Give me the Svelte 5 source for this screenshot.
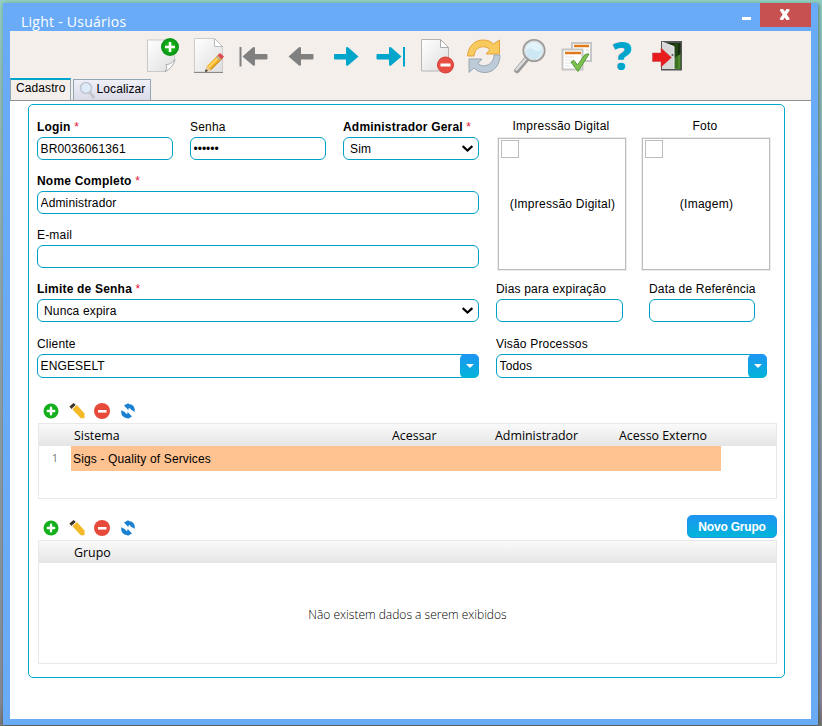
<script>
	let tab = 'cadastro';
	let login = 'BR0036061361';
	let senha = '123456';
	let adminGeral = 'Sim';
	let nome = 'Administrador';
	let email = '';
	let limite = 'Nunca expira';
	let dias = '';
	let dataRef = '';
	let cliente = 'ENGESELT';
	let visao = 'Todos';

	const sistemas = ['Sigs - Quality of Services'];
</script>

{#snippet gridTools()}
	<div class="grid-tools">
		<svg viewBox="0 0 16 16"
			><circle cx="8" cy="8" r="7.5" fill="#13b01c" /><path
				d="M8 4.8v6.4M4.8 8h6.4"
				stroke="#fff"
				stroke-width="2.4"
				stroke-linecap="round"
			/></svg
		>
		<svg viewBox="0 0 16 16"
			><path d="M3.3 6.2l4.6-4.2 7.6 8.5v4.700h-3.700z" fill="#f4b926" /><path
				d="M.4 3.6L4.6 0l2.200 2-4.200 3.900z"
				fill="#3d3427"
			/><path d="M2.800 6l4.600-4.200" stroke="#eee" stroke-width="1" /></svg
		>
		<svg viewBox="0 0 16 16"
			><circle cx="8" cy="8" r="8" fill="#e74a3b" /><path
				d="M4 8.300h8.500"
				stroke="#fff"
				stroke-width="2.600"
			/></svg
		>
		<svg viewBox="0 0 16 16"
			><g fill="#1b80d0"
				><path d="M4 2.500L8.500 0v1c4 0 7 3 6.200 7.800l-3.700-2C10.500 5.600 10 5.200 8.500 5.200v2z" /><path
					d="M12 13.500L7.500 16v-1c-4 0-7-3-6.200-7.800l3.700 2c.5 1.200 1 1.600 2.500 1.600v-2z"
				/></g
			></svg
		>
	</div>
{/snippet}

{#snippet chevron()}
	<svg class="chevron" viewBox="0 0 10 6"
		><path d="M.6.8L5 4.800 9.400.8" fill="none" stroke="#000" stroke-width="2" /></svg
	>
{/snippet}

<div class="desktop">
	<div class="window">
		<div class="titlebar">
			<span class="title">Light - Usuários</span>
			<button class="minimize" aria-label="Minimizar"><span></span></button>
			<button class="close" aria-label="Fechar">
				<svg viewBox="0 0 12 11"
					><path d="M2 0L9.500 11M9.500 0L2 11" stroke="#fff" stroke-width="3.400" /></svg
				>
			</button>
		</div>

		<div class="toolbar">
			<svg viewBox="0 0 36 36">
				<path
					d="M3.500 2h27v19c-1 5-5 10-9 12.500h-18z"
					fill="url(#paper)"
					stroke="#c9c9c9"
				/>
				<path d="M21 33.500c2-3 2-5 1-7 3 0 6-1 9-5-1 5-5 10-10 12z" fill="#fff" stroke="#aaa" />
				<circle cx="26" cy="9" r="9" fill="url(#green)" />
				<path d="M26 4v10M21 9h10" stroke="#fff" stroke-width="2.5" />
			</svg>
			<svg viewBox="0 0 36 36">
				<path d="M4.500.5h20l8 8V34h-28z" fill="url(#paper)" stroke="#ccc" />
				<path d="M4 34.500h29" stroke="#888" />
				<path d="M24.500.5v8h8z" fill="#fff" stroke="#bbb" />
				<path d="M15 34l2-6 12-12 4 4-12 12z" fill="#f5b32a" />
				<path d="M18.500 29.500L30.500 17.500" stroke="#ffe27a" stroke-width="1.300" />
				<path d="M20.500 32L32 20.500" stroke="#bf7c17" stroke-width="1" />
				<path d="M27.500 17.500l2.500-2.500 4 3.500-2.500 2.800z" fill="#d94b55" />
				<path d="M26.300 18.500l4.200 3.800" stroke="#aaa" stroke-width="1.500" />
				<path d="M15 34l2-6 4.200 4z" fill="#e9c99a" /><path d="M15 34l.8-3 2.200 2z" fill="#333" />
			</svg>
			<svg viewBox="0 0 36 36" fill="#808080">
				<path d="M3.500 9H5.500v19.500H3.500z" />
				<path d="M6.500 18.500L17 9.300q2-1 2 1V16h11.500q1 0 1 1v3.500q0 1-1 1H19v5q0 2-2 1z" />
			</svg>
			<svg viewBox="0 0 36 36" fill="#808080">
				<path d="M6.500 18.500L17 9.300q2-1 2 1V16h11.500q1 0 1 1v3.500q0 1-1 1H19v5q0 2-2 1z" />
			</svg>
			<svg viewBox="0 0 36 36" fill="#00a5cc">
				<path d="M30.500 18.500L20 9.300q-2-1-2 1V16H7q-1 0-1 1v3.500q0 1 1 1h11v5q0 2 2 1z" />
			</svg>
			<svg viewBox="0 0 36 36" fill="#00a5cc">
				<path d="M27.500 18.500L17 9.300q-2-1-2 1V16H3.500q-1 0-1 1v3.500q0 1 1 1H15v5q0 2 2 1z" />
				<path d="M29 9H31v19.500H29z" />
			</svg>
			<svg viewBox="0 0 36 36">
				<path d="M1.500 1.500h19l8 8V33h-27z" fill="url(#paper)" stroke="#b5b5b5" />
				<path d="M20.500 1.500v8h8z" fill="#fff" stroke="#aaa" />
				<circle cx="25.500" cy="27" r="8" fill="#e94c43" stroke="#d0413b" />
				<path d="M20.500 27h10" stroke="#fff" stroke-width="3" />
			</svg>
			<svg viewBox="0 0 36 36">
				<path
					d="M1.500 18C2 8 9 2 17 2c5 0 8 1.500 10.500 4L33.500 2v14H20l4-4.500C18 6 8.500 9 8 18z"
					fill="#f8c95c"
					stroke="#e3a440"
				/>
				<path
					d="M34 17C34 27 28 34.500 19 34.500c-5 0-8-1.500-11-4.500L3 34.500V21h13l-4 4.500C18 31 28 26 28 17z"
					fill="#bccbd7"
					stroke="#9aa8b3"
				/>
			</svg>
			<svg viewBox="0 0 36 36">
				<path d="M15 20.500L5 32.500" stroke="#999" stroke-width="5.500" stroke-linecap="round" />
				<path d="M14 20.500L4.500 31.500" stroke="#ddd" stroke-width="2.500" stroke-linecap="round" />
				<circle cx="22" cy="12.500" r="10.300" fill="#e3f3fb" stroke="#999" stroke-width="2.500" />
				<circle cx="22" cy="12.500" r="9.500" fill="none" stroke="#e5e5e5" stroke-width="1" />
				<path d="M14 13c2-3 5-3 8-1s5 1 8-1c0 12-15 14-16 2z" fill="#cde8f5" />
			</svg>
			<svg viewBox="0 0 36 36">
				<path d="M14 5h19v18H14z" fill="#fff" stroke="#c6c6c6" stroke-width="2" />
				<path d="M16 8h15" stroke="#e07a18" stroke-width="2.500" />
				<path d="M28 12h3M28 15h3" stroke="#ddd" />
				<path d="M4.500 11.500h20v20h-20z" fill="#fff" stroke="#c6c6c6" stroke-width="2" />
				<path d="M7 15h16" stroke="#e07a18" stroke-width="2.500" />
				<path d="M7 19h9M7 22h9M7 25h7M7 28h5" stroke="#e1e1e1" />
				<path
					d="M13 24l3-1.500 3.500 4.500L27 16.500l4-.5-11 17.500z"
					fill="#7fc252"
					stroke="#4d9a32"
					stroke-width="1"
				/>
			</svg>
			<svg viewBox="0 0 36 36"
				><text x="18" y="32" text-anchor="middle" class="help">?</text></svg
			>
			<svg viewBox="0 0 36 36">
				<path d="M11 3h21v29.500H11z" fill="#555" />
				<path d="M13 5h17.500v26H13z" fill="#18300f" />
				<path d="M24 20l6.500-4v15H24z" fill="#4f8a2f" />
				<path d="M24 6l4-1v25h-4z" fill="#2c5a1c" opacity=".5" />
				<path d="M12 4l12 4.500V31L12 31z" fill="#d8d8d8" />
				<path d="M12 4l12 4.500V31" fill="none" stroke="#f0f0f0" />
				<circle cx="22.500" cy="17" r="1" fill="#555" />
				<path
					d="M2.500 15h8.500v-5L21.500 19.500 11 29v-5.500H2.500z"
					fill="#e81c1c"
					stroke="#b44"
					stroke-width=".5"
				/>
			</svg>
			<svg class="defs">
				<defs>
					<linearGradient id="paper" x1="0" y1="0" x2="1" y2="1"
						><stop stop-color="#fff" /><stop offset="1" stop-color="#dedede" /></linearGradient
					>
					<radialGradient id="green"
						><stop stop-color="#29cc1c" /><stop offset="1" stop-color="#079015" /></radialGradient
					>
				</defs>
			</svg>
		</div>

		<div class="tabs">
			<button class="tab" class:active={tab === 'cadastro'} on:click={() => (tab = 'cadastro')}
				>Cadastro</button
			>
			<button
				class="tab search"
				class:active={tab === 'localizar'}
				on:click={() => (tab = 'localizar')}
			>
				<svg viewBox="0 0 17 18"
					><path d="M10.500 11l4 5" stroke="#c3c6cc" stroke-width="3" stroke-linecap="round" /><circle
						cx="7"
						cy="7"
						r="5.500"
						fill="#dcecf9"
						stroke="#c0c6cf"
						stroke-width="1.500"
					/></svg
				>Localizar
			</button>
		</div>

		<div class="content">
			<div class="panel">
				<div class="form">
					<div class="main">
						<div class="row three">
							<label><b>Login</b> <i>*</i><input bind:value={login} /></label>
							<label>Senha<input type="password" bind:value={senha} /></label>
							<label
								><b>Administrador Geral</b> <i>*</i>
								<span class="select"
									><select bind:value={adminGeral}><option>Sim</option><option>Não</option></select
									>{@render chevron()}</span
								>
							</label>
						</div>
						<div class="row">
							<label><b>Nome Completo</b> <i>*</i><input bind:value={nome} /></label>
						</div>
						<div class="row">
							<label>E-mail<input bind:value={email} /></label>
						</div>
					</div>
					<div class="pictures">
						<figure>
							<figcaption>Impressão Digital</figcaption>
							<div class="picture"><span class="broken"></span>(Impressão Digital)</div>
						</figure>
						<figure>
							<figcaption>Foto</figcaption>
							<div class="picture"><span class="broken"></span>(Imagem)</div>
						</figure>
					</div>
				</div>
				<div class="form limits">
					<label
						><b>Limite de Senha</b> <i>*</i>
						<span class="select"
							><select bind:value={limite}><option>Nunca expira</option></select
							>{@render chevron()}</span
						>
					</label>
					<div class="dates">
						<label>Dias para expiração<input bind:value={dias} /></label>
						<label>Data de Referência<input bind:value={dataRef} /></label>
					</div>
				</div>
				<div class="form combos">
					<label
						>Cliente
						<span class="combo"><input bind:value={cliente} /><span class="drop"></span></span>
					</label>
					<label class="visao"
						>Visão Processos
						<span class="combo"><input bind:value={visao} /><span class="drop"></span></span>
					</label>
				</div>

				<div class="tools-row">{@render gridTools()}</div>
				<div class="grid systems">
					<div class="grid-head">
						<span>Sistema</span><span>Acessar</span><span>Administrador</span><span
							>Acesso Externo</span
						>
					</div>
					{#each sistemas as sistema, i}
						<div class="grid-row"><span class="num">{i + 1}</span><span class="cell">{sistema}</span></div>
					{/each}
				</div>

				<div class="tools-row second">
					{@render gridTools()}
					<button class="new-group">Novo Grupo</button>
				</div>
				<div class="grid groups">
					<div class="grid-head"><span>Grupo</span></div>
					<p>Não existem dados a serem exibidos</p>
				</div>
			</div>
		</div>
	</div>
</div>

<style>
	:global(body) {
		overflow: hidden;
	}
	* {
		box-sizing: border-box;
	}
	.desktop {
		height: 726px;
		padding: 3px 4px 1px 3px;
		background: linear-gradient(#90d0c2 0, #8fbfb9 80px, #8fa6ac 300px, #868c97 700px, #777 726px);
		font: 12px 'Liberation Sans', Arial, sans-serif;
		color: #000;
	}
	.window {
		height: 722px;
		padding: 0 7px 6px;
		background: #6aabf7;
		box-shadow: 1px 1px 4px rgba(0, 0, 0, 0.4);
		display: flex;
		flex-direction: column;
	}
	button {
		border: 0;
		padding: 0;
		font: inherit;
		color: inherit;
	}
	.titlebar {
		height: 28px;
		display: flex;
		align-items: flex-start;
		color: #fff;
	}
	.title {
		flex: 1;
		padding: 8px 0 0 11px;
		font: 14px/22px 'Open Sans', sans-serif;
		letter-spacing: 0.25px;
	}
	.minimize {
		width: 28px;
		height: 24px;
		background: none;
	}
	.minimize span {
		display: block;
		width: 9px;
		height: 3px;
		margin: 7px 0 0 10px;
		background: #fff;
	}
	.close {
		width: 51px;
		height: 24px;
		background: #c75050;
	}
	.close svg {
		display: block;
		width: 12px;
		height: 11px;
		margin: 0 auto 1px 19px;
	}
	.toolbar {
		height: 47px;
		padding: 7px 0 0 134px;
		display: flex;
		gap: 10px;
		background: #f4efeb;
	}
	.toolbar svg {
		width: 36px;
		height: 36px;
		flex: none;
		overflow: visible;
	}
	.toolbar .defs {
		width: 0;
		height: 0;
	}
	.help {
		font: 800 38px/1 'Open Sans', sans-serif;
		fill: #00a5cc;
	}
	.tabs {
		height: 23px;
		display: flex;
		align-items: flex-end;
		gap: 2px;
		background: #f4efeb;
		border-bottom: 1px solid #8c9396;
	}
	.tab {
		height: 21px;
		padding: 0 5px 2px;
		border: 1px solid #91a7b4;
		border-bottom: 0;
		background: linear-gradient(#f0f0f9, #dadae9);
		display: flex;
		align-items: center;
		letter-spacing: 0.1px;
	}
	.tab.active {
		height: 22px;
		padding: 0 4px 4px 5px;
		border-top: 2px solid #00a5cc;
		background: #f4efeb;
	}
	.tab.search svg {
		width: 17px;
		height: 18px;
		margin: 2px 1px 0 0;
	}
	.content {
		flex: 1;
		padding: 3px 26px 0 18px;
		background: #fff;
	}
	.panel {
		height: 574px;
		padding: 14px 7px 0 8px;
		border: 1px solid #00a9cc;
		border-radius: 5px;
	}
	.form {
		display: grid;
		grid-template-columns: 442px 1fr;
		column-gap: 17px;
	}
	.row {
		height: 54px;
	}
	.three {
		display: grid;
		grid-template-columns: repeat(3, 136px);
		column-gap: 17px;
	}
	label {
		display: block;
		line-height: 16px;
		letter-spacing: 0.18px;
	}
	b {
		letter-spacing: 0.2px;
	}
	i {
		font-style: normal;
		color: #e3123a;
	}
	input,
	select {
		display: block;
		width: 100%;
		height: 23px;
		margin-top: 2px;
		padding: 0 2.5px;
		border: 1px solid #00a0c6;
		border-radius: 6px;
		background: #fff;
		font: 12px 'Liberation Sans', Arial, sans-serif;
		letter-spacing: 0.15px;
		color: #000;
		appearance: none;
		outline: 0;
	}
	select {
		padding-left: 6px;
	}
	input[type='password'] {
		letter-spacing: 0;
	}
	.select,
	.combo {
		display: block;
		position: relative;
	}
	.chevron {
		position: absolute;
		right: 6px;
		top: 8px;
		width: 11px;
		height: 7px;
	}
	.pictures {
		display: flex;
		gap: 14px;
		padding-left: 1px;
	}
	figure {
		margin: -1px 0 0;
	}
	figcaption {
		height: 19px;
		padding-right: 2px;
		text-align: center;
		line-height: 16px;
		letter-spacing: 0.25px;
	}
	.picture {
		position: relative;
		width: 130px;
		height: 134px;
		padding: 0 0 1px 1px;
		border: 1px solid #ececec;
		box-shadow: inset 0 0 0 1px #bdbdbd;
		display: flex;
		align-items: center;
		justify-content: center;
		letter-spacing: 0.25px;
	}
	.broken {
		position: absolute;
		left: 3px;
		top: 2px;
		width: 18px;
		height: 18px;
		border: 1px solid #bdbdbd;
	}
	.limits {
		height: 55px;
	}
	.dates {
		display: grid;
		grid-template-columns: 127px 106px;
		column-gap: 26px;
	}
	.dates label {
		white-space: nowrap;
	}
	.combo input {
		height: 24px;
	}
	.visao {
		width: 271px;
	}
	.drop {
		position: absolute;
		right: 0;
		top: 0;
		width: 19px;
		height: 24px;
		border-radius: 5px;
		background: linear-gradient(#1e95f2, #00b5d8);
	}
	.drop::after {
		content: '';
		position: absolute;
		left: 6px;
		top: 10px;
		border: 4px solid transparent;
		border-top-color: #fff;
		border-bottom: 0;
	}
	.tools-row {
		height: 45px;
		padding: 0 0 4px 6px;
		display: flex;
		align-items: flex-end;
		justify-content: space-between;
	}
	.grid-tools {
		display: flex;
		gap: 9.6px;
	}
	.grid-tools svg {
		width: 16px;
		height: 16px;
	}
	.tools-row.second {
		height: 41px;
	}
	.new-group {
		width: 90px;
		height: 23px;
		margin-bottom: -2px;
		border: 1px solid #1e95ea;
		border-radius: 5px;
		background: linear-gradient(#1e95f2, #00b5d8);
		color: #fff;
		font-weight: bold;
		letter-spacing: -0.2px;
	}
	.grid {
		width: 739px;
		margin-left: 1px;
		border: 1px solid #e8e8e8;
	}
	.systems {
		height: 76px;
	}
	.groups {
		height: 124px;
	}
	.grid-head {
		height: 22px;
		padding-left: 35px;
		display: grid;
		grid-template-columns: 318px 103px 124px 1fr;
		background: linear-gradient(#fafafa, #e5e5e5);
		font: 12.400px/24px 'Open Sans', sans-serif;
	}
	.grid-row {
		height: 25px;
		display: flex;
		line-height: 26px;
	}
	.num {
		width: 32px;
		text-align: center;
		color: #777;
		font: 11px/24px 'Open Sans', sans-serif;
	}
	.cell {
		width: 650px;
		padding-left: 2px;
		background: #ffc391;
		letter-spacing: 0.15px;
	}
	.groups p {
		margin: 43px 0 0;
		text-align: center;
		font: 300 12px/18px 'Open Sans', sans-serif;
	}
</style>
